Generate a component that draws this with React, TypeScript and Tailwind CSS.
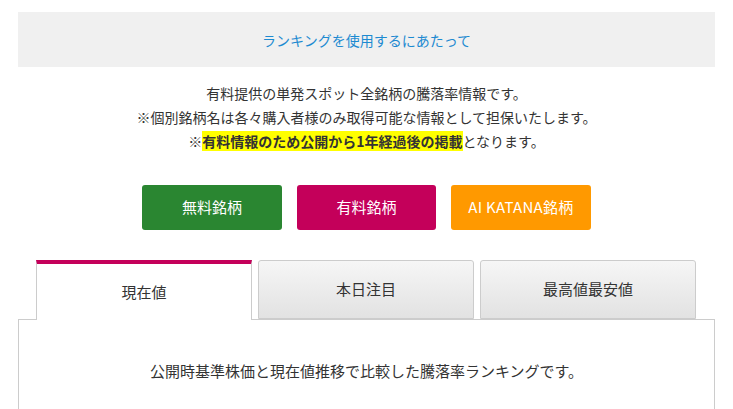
export default function App() {
  const tabs = ['現在値', '本日注目', '最高値最安値'];
  const font = { fontFamily: '"Noto Sans CJK JP", "Noto Sans", sans-serif' };

  return (
    <div className="w-[733px] h-[409px] bg-white overflow-hidden px-[18px] pt-3 text-[#333]" style={font}>
      <div className="h-[55px] bg-[#f0f0f0] flex items-center justify-center text-sm text-[#1d8ad1]">
        ランキングを使用するにあたって
      </div>

      <div className="mt-[14px] text-center text-sm leading-6">
        <p>有料提供の単発スポット全銘柄の騰落率情報です。</p>
        <p>※個別銘柄名は各々購入者様のみ取得可能な情報として担保いたします。</p>
        <p>
          ※<span className="bg-[#ffff00] font-bold">有料情報のため公開から1年経過後の掲載</span>となります。
        </p>
      </div>

      <div className="mt-[32px] flex justify-center gap-[15px]">
        <button className="w-[140px] h-[45px] rounded-[3px] bg-[#2a8631] text-white text-[15px]">無料銘柄</button>
        <button className="w-[139px] h-[45px] rounded-[3px] bg-[#c4005a] text-white text-[15px]">有料銘柄</button>
        <button className="w-[140px] h-[45px] rounded-[3px] bg-[#ff9900] text-white text-[15px] tracking-[0.3px]">AI KATANA銘柄</button>
      </div>

      <div className="mt-[30px] px-[18px] flex gap-[6px] relative z-10">
        {tabs.map((t, i) =>
          i === 0 ? (
            <div
              key={t}
              className="w-[216px] h-[60px] bg-white border-t-4 border-t-[#c4005a] border-x border-x-[#ccc] flex items-center justify-center text-[15px] -mb-px"
            >
              {t}
            </div>
          ) : (
            <div
              key={t}
              className="w-[216px] h-[59px] rounded-t-[3px] border border-[#ccc] bg-gradient-to-b from-[#f6f6f6] to-[#e2e2e2] flex items-center justify-center text-[15px]"
            >
              {t}
            </div>
          )
        )}
      </div>

      <div className="h-[120px] border border-[#ccc] flex justify-center pt-[40px] text-[15px]">
        公開時基準株価と現在値推移で比較した騰落率ランキングです。
      </div>
    </div>
  );
}
